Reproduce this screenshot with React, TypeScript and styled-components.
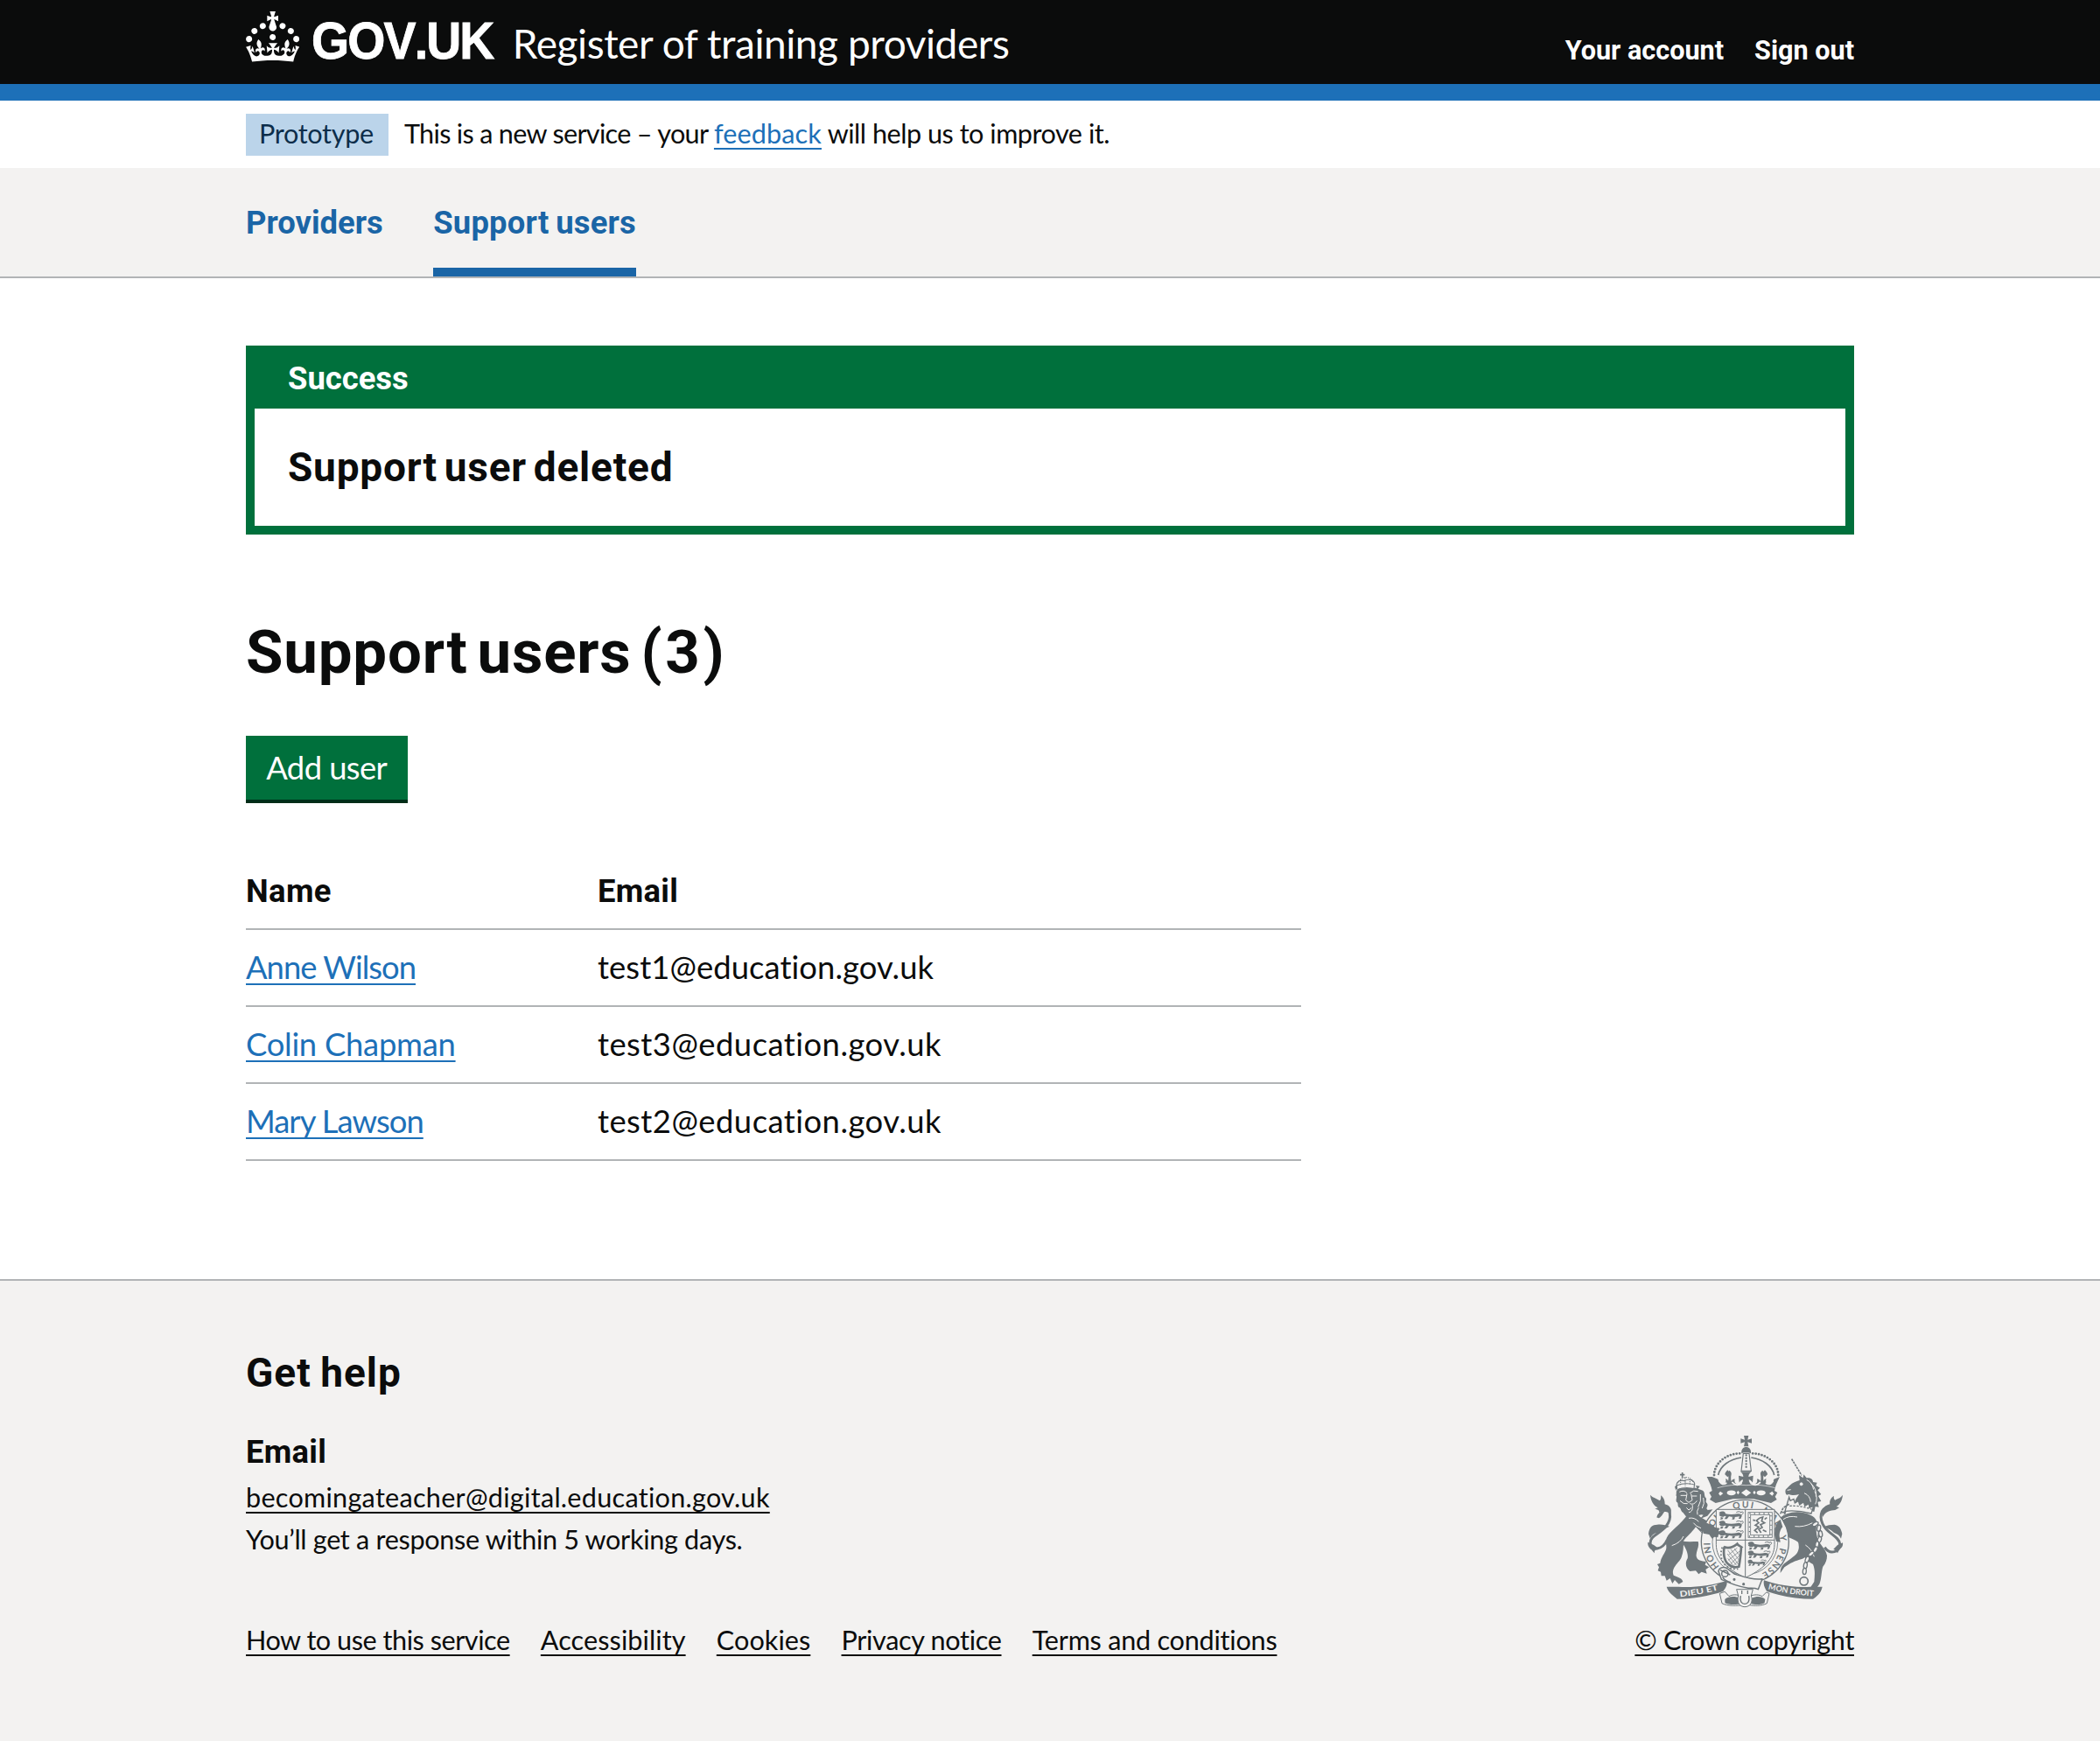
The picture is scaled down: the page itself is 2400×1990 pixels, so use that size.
import React from 'react';
import styled, { createGlobalStyle, css } from 'styled-components';

const ink = '#0b0c0c';
const link = '#1d70b8';
const navBlue = '#1a65a6';
const green = '#00703c';
const canvas = '#f3f2f1';
const rule = '#b1b4b6';
const crest = '#6f777b';

const regular = css`
  font-family: Lato, 'Noto Sans', sans-serif;
  font-weight: 400;
`;
const bold = css`
  font-family: Roboto, 'Liberation Sans', sans-serif;
  font-weight: 700;
`;

const GlobalStyle = createGlobalStyle`
  *, *::before, *::after { box-sizing: border-box; }
  body {
    margin: 0;
    background: #fff;
    color: ${ink};
    font-family: Lato, 'Noto Sans', sans-serif;
    -webkit-font-smoothing: antialiased;
  }
  h1, h2, h3, p, ul { margin: 0; padding: 0; }
  a { color: inherit; text-decoration: none; }
`;

const Page = styled.div`
  display: flex;
  flex-direction: column;
  min-height: 1990px;
`;

const Container = styled.div`
  width: 1838px;
  margin: 0 auto;
`;

const Track = styled.span<{ $ls: number; $ws?: number }>`
  letter-spacing: ${p => p.$ls}px;
  word-spacing: ${p => p.$ws ?? 0}px;
`;

/* Header */
const Header = styled.header`
  background: ${ink};
  border-bottom: 19px solid ${link};
`;
const HeaderRow = styled(Container)`
  display: flex;
  align-items: flex-start;
  height: 96px;
  color: #fff;
  white-space: nowrap;
`;
const Crown = styled.svg`
  flex: none;
  width: 61.3px;
  height: 57.5px;
  margin-top: 13px;
  fill: #fff;
`;
const Wordmark = styled.a`
  flex: none;
  width: 208px;
  margin: 17px 0 0 13.5px;
  font: 700 59px/60px 'Liberation Sans', Arial, sans-serif;
  font-kerning: none;
  letter-spacing: -2px;
  transform: scaleX(0.94);
  transform-origin: left;
  -webkit-text-stroke: 0.8px #fff;
`;
const ServiceName = styled.a`
  ${regular}
  margin: 20px 0 0 22px;
  font-size: 46px;
  line-height: 60px;
`;
const AccountNav = styled.nav`
  ${bold}
  display: flex;
  gap: 35px;
  margin: 38px 0 0 auto;
  font-size: 30.6px;
  line-height: 40px;
`;

/* Phase banner */
const Phase = styled(Container)`
  display: flex;
  align-items: center;
  gap: 18px;
  height: 77px;
  font-size: 30.6px;
  white-space: nowrap;
`;
const Tag = styled.strong`
  ${regular}
  width: 163px;
  height: 48px;
  padding: 0 0 3px 15px;
  background: #bbd4ea;
  color: #0c2d4a;
  line-height: 45px;
`;
const PhaseText = styled.span`
  height: 48px;
  line-height: 45px;
`;

const TextLink = styled.a<{ $ls?: number; $dark?: boolean }>`
  color: ${p => (p.$dark ? ink : link)};
  letter-spacing: ${p => p.$ls ?? 0}px;
  text-decoration: underline;
  text-decoration-thickness: 2px;
  text-decoration-skip-ink: none;
  text-underline-offset: 5px;
`;

/* Primary navigation */
const PrimaryNav = styled.nav`
  background: ${canvas};
  border-bottom: 2px solid ${rule};
`;
const NavList = styled(Container)`
  display: flex;
  gap: 57.5px;
`;
const NavItem = styled.a<{ $active?: boolean }>`
  ${bold}
  height: 124px;
  color: ${navBlue};
  font-size: 36.4px;
  line-height: 125px;
  box-shadow: ${p => (p.$active ? `inset 0 -10px 0 ${navBlue}` : 'none')};
`;

/* Main */
const Main = styled.main`
  width: 1838px;
  margin: 0 auto;
  padding: 77px 0 135px;
`;
const Notification = styled.section`
  height: 216px;
  background: ${green};
  padding: 10px;
`;
const NotificationTitle = styled.h2`
  ${bold}
  height: 62px;
  padding-left: 38px;
  color: #fff;
  font-size: 36.4px;
  line-height: 55px;
`;
const NotificationBody = styled.p`
  ${bold}
  height: 134px;
  padding-left: 38px;
  background: #fff;
  font-size: 46px;
  line-height: 134px;
`;
const PageTitle = styled.h1`
  ${bold}
  margin-top: 96px;
  font-size: 69px;
  line-height: 78px;
`;
const Button = styled.button`
  ${regular}
  display: block;
  width: 184.5px;
  height: 73px;
  margin-top: 56px;
  padding: 0;
  border: 0;
  background: ${green};
  box-shadow: 0 4px 0 #002d18;
  color: #fff;
  font-size: 36.4px;
  line-height: 73px;
  text-align: center;
`;
const Table = styled.div`
  width: 1206px;
  margin-top: 61px;
  font-size: 36.4px;
`;
const Row = styled.div<{ $head?: boolean }>`
  display: grid;
  grid-template-columns: 402px 1fr;
  height: 88px;
  border-bottom: 2px solid ${rule};
  line-height: 85px;
  ${p => p.$head && css`${bold} line-height: 87px;`}
`;

/* Footer */
const Footer = styled.footer`
  flex: 1;
  background: ${canvas};
  border-top: 2px solid ${rule};
`;
const FooterRow = styled(Container)`
  display: flex;
  justify-content: space-between;
  align-items: flex-end;
  padding-top: 75px;
  font-size: 30.6px;
  line-height: 48px;
  white-space: nowrap;
`;
const HelpTitle = styled.h2`
  ${bold}
  font-size: 46px;
  line-height: 60px;
`;
const HelpSubtitle = styled.h3`
  ${bold}
  margin: 37px 0 4px;
  font-size: 36.4px;
  line-height: 48px;
`;
const FooterLinks = styled.nav`
  display: flex;
  gap: 35.2px;
  margin-top: 67px;
`;
const Copyright = styled.div`
  display: flex;
  flex-direction: column;
  align-items: center;
  gap: 9px;
`;
const Crest = styled.svg`
  display: block;
  width: 232px;
  height: 206px;
`;

const CROWN =
  'M22.6 10.4c-1 .4-2-.1-2.4-1-.4-.9.1-2 1-2.4.9-.4 2 .1 2.4 1s-.1 2-1 2.4m-5.9 6.7c-.9.4-2-.1-2.4-1-.4-.9.1-2 1-2.4.9-.4 2 .1 2.4 1s-.1 2-1 2.4m10.8-3.7c-1 .4-2-.1-2.4-1-.4-.9.1-2 1-2.4.9-.4 2 .1 2.4 1s0 2-1 2.4m3.3 4.8c-1 .4-2-.1-2.4-1-.4-.9.1-2 1-2.4.9-.4 2 .1 2.4 1s-.1 2-1 2.4M17 4.7l2.3 1.2V2.5l-2.3.7-.2-.2.9-3h-3.4l.9 3-.2.2c-.1.1-2.3-.7-2.3-.7v3.4L15 4.7c.1.1.1.2.2.2l-1.3 4c-.1.2-.1.4-.1.6 0 1.1.8 2 1.9 2.2h.7c1-.2 1.9-1.1 1.9-2.1 0-.2 0-.4-.1-.6l-1.3-4c-.1-.2 0-.2.1-.3m-7.6 5.7c.9.4 2-.1 2.4-1 .4-.9-.1-2-1-2.4-.9-.4-2 .1-2.4 1s0 2 1 2.4m-5 3c.9.4 2-.1 2.4-1 .4-.9-.1-2-1-2.4-.9-.4-2 .1-2.4 1s.1 2 1 2.4m-3.2 4.8c.9.4 2-.1 2.4-1 .4-.9-.1-2-1-2.4-.9-.4-2 .1-2.4 1s0 2 1 2.4m14.8 11c4.4 0 8.6.3 12.3.8 1.1-4.5 2.4-7 3.7-8.8l-2.5-.9c.2 1.3.3 1.9 0 2.7-.4-.4-.8-1.1-1.1-2.3l-1.2 4c.7-.5 1.3-.8 2-.9-1.1 2.5-2.6 3.1-3.5 3-1.1-.2-1.7-1.2-1.5-2.1.3-1.2 1.5-1.5 2.1-.1 1.1-2.3-.8-3-2-2.3 1.9-1.9 2.1-3.5.6-5.6-2.1 1.6-2.1 3.2-1.2 5.5-1.2-1.4-3.2-.6-2.5 1.6.9-1.4 2.1-.5 1.9.8-.2 1.1-1.7 2.1-3.5 1.9-2.7-.2-2.9-2.1-2.9-3.6.7-.1 1.9.5 2.9 1.9l.4-4.3c-1.1 1.1-2.1 1.4-3.2 1.4.4-1.2 2.1-3 2.1-3h-5.4s1.7 1.9 2.1 3c-1.1 0-2.1-.2-3.2-1.4l.4 4.3c1-1.4 2.2-2 2.9-1.9-.1 1.5-.2 3.4-2.9 3.6-1.9.2-3.4-.8-3.5-1.9-.2-1.3 1-2.2 1.9-.8.7-2.3-1.2-3-2.5-1.6.9-2.2.9-3.9-1.2-5.5-1.5 2-1.3 3.7.6 5.6-1.2-.7-3.1 0-2 2.3.6-1.4 1.8-1.1 2.1.1.2.9-.3 1.9-1.5 2.1-.9.2-2.4-.5-3.5-3 .6 0 1.2.3 2 .9l-1.2-4c-.3 1.1-.7 1.9-1.1 2.3-.3-.8-.2-1.4 0-2.7l-2.9.9C1.3 23 2.6 25.5 3.7 30c3.7-.5 7.9-.8 12.3-.8';

/* One passant lion of the English quarters, drawn in a 92 x 30 cell. */
const Passant = ({ x, y, s = 1 }: { x: number; y: number; s?: number }) => (
  <g transform={`translate(${x} ${y}) scale(${s})`} fill={crest}>
    <path d="M4 4c7-5 16-4 20 1 3 6-1 12-6 14-7 1-14-2-15-8l5-1-5-2z" />
    <path d="M22 8c14 4 30 4 44 1 8-2 15 2 15 8l-4 9h-7l3-8c-12 3-26 3-36 0l-7 9h-9l6-9-9-3z" />
    <path d="M8 20l10 2-4 6H5l4-3zM48 20l10 1-3 7h-9l3-3z" />
    <path d="M76 14c8-2 12-8 8-12l-8 2M62 4c6-4 14-3 16 1" fill="none" stroke={crest} strokeWidth="3" />
  </g>
);

const Leaf = ({ x, y, r }: { x: number; y: number; r: number }) => (
  <path transform={`translate(${x} ${y}) rotate(${r})`} d="M0 6C8-8 22-10 36-4 26-2 22 8 6 11z" />
);

function RoyalArms() {
  return (
    <Crest viewBox="0 0 696 618" aria-hidden="true">
      <defs>
        <path id="garter" d="M349 502a120 120 0 1 1 .1 0" />
        <path id="mottoLeft" d="M126 568Q200 560 270 541" />
        <path id="mottoRight" d="M428 541Q500 560 592 566" />
      </defs>

      {/* crown */}
      <g fill={crest}>
        <path d="M347 15h14l-3 14 14-4v16l-14-4 3 15h-16l3-15-14 4V25l14 4-3-14z" />
        <path d="M337 76c-2-14 6-22 16-22s18 8 16 22l-7-3h-18z" />
        <path d="M343 76h20l7 60h-34z" fill="none" stroke={crest} strokeWidth="3.5" />
        <path d="M353 82v50" stroke={crest} strokeWidth="7" strokeDasharray="0 10" strokeLinecap="round" />
        <g fill="none" stroke={crest}>
          <path d="M243 150C244 108 286 76 332 76M463 150C462 108 420 76 374 76" strokeWidth="8.5" strokeDasharray="0 10.5" strokeLinecap="round" />
          <path d="M257 150C264 118 296 96 336 90M449 150C442 118 410 96 370 90" strokeWidth="5" />
        </g>
        <path d="M236 156l20 8c2 10 8 16 16 16 10 0 14-8 10-17 4 0 8 3 9 8 2-8 2-18-2-26 2-4 4-8 6-11 5 4 8 8 7 14-2 8-2 15 0 24 3-6 7-9 12-8-3 10 2 17 12 17 10 1 16-5 16-15-5 0-9 4-13 10l-2-24 16 4c0-8-5-13-10-17h38c-5 4-10 9-10 17l16-4-2 24c-4-6-8-10-13-10 0 10 6 16 16 15 10 0 15-7 12-17 5-1 9 2 12 8 2-9 2-16 0-24-1-6 2-10 7-14 2 3 4 7 6 11-4 8-4 18-2 26 1-5 5-8 9-8-4 9 0 17 10 17 8 0 14-6 16-16l20-8c-10 20-16 34-18 48l10 6-8 14 6 10-20 12-60-14h-70l-60 14-20-12 6-10-8-14 10-6c-2-14-8-28-18-48z" />
        <path d="M289 133c5 5 9 10 9 15l-9 9-9-9c0-5 4-10 9-15M417 133c5 5 9 10 9 15l-9 9-9-9c0-5 4-10 9-15" />
        <g fill={canvas}>
          <ellipse cx="302" cy="211" rx="15" ry="8.5" />
          <ellipse cx="404" cy="211" rx="15" ry="8.5" />
          <path d="M353 199l17 12-17 12-17-12zM264 206l10 7-10 8-6-7zM442 206l-10 7 10 8 6-7zM325 203l5 7-5 7-5-7zM381 203l5 7-5 7-5-7z" />
        </g>
        <path
          d="M262 172q8 14 22 6M306 176q14 14 30 2M444 172q-8 14-22 6M400 176q-14 14-30 2"
          fill="none" stroke={canvas} strokeWidth="6" strokeLinecap="round"
        />
        <path d="M254 194q50-14 99-9 49-5 99 9" fill="none" stroke={canvas} strokeWidth="2" />
      </g>

      {/* lion */}
      <g fill={crest}>
        <path d="M154 282C130 320 92 340 80 366c-6 14 2 26-2 40-6 16-18 28-20 46l-10 4 6 10-4 12 10 4 2 14 12 0 6 16 12-8 8 18 8-12 14 14 14-8c-2-12-16-16-32-22-8-18 6-34 20-50 14-18 14-44 14-68 10-14 30-30 42-48l34 34 14-2 8 14 10-6 12 4 10-10-4-10-12-8 2-12-16-2-8-16-34-20c-14-14-26-24-42-26z" />
        <path d="M130 376c20 4 40 2 58 2 6 16-8 34-6 50 2 14 18 18 34 18l-4 12 14 8-12 8 4 14-18-6-10 8-10-12-20 2c-14-10-18-28-8-44 4-20-10-40-22-60z" />
        <path d="M195 300l25-10 18-22-18 2z" />
        <path d="M118 200c-8 6-2 12-6 20 6 4-2 14 2 22 8 2 2 14 8 18 8 2 6 14 14 18l14 18c8 4 20 2 26-6l24-4 18 4c-6-8 2-12 2-22-8-4 6-12-2-22-8-4 4-14-6-20-4-12 0-20-12-24l-20-8-56 2z" />
        <path d="M112 204l-4-14 10-8M186 200l8-12-14-2" />
      </g>
      <g fill="none" stroke={canvas} strokeWidth="3">
        <path d="M124 208q16-8 26 4M160 212q12-12 28-6M128 220h20M166 222h18M150 214l-4 22 10 8 12-8-4-22M126 238q12 14 26 10M160 248q14 6 24-10M148 262l8 8 10-8M168 252c4 14-2 26-12 26M196 216q4 24-8 44M206 228q6 20-4 36M190 262q-8 12-4 24" />
        <path d="M98 392q30-10 40-32M172 314q8 12 26 18M156 298q20-4 34 12M200 344l30 8" />
      </g>
      <g fill="none" stroke={crest} strokeWidth="3.2">
        <path d="M116 200q30-12 60-2M114 186q32-12 64-2M116 198l-2-16c2-12 14-16 28-12 12-8 30-4 34 8l-2 18" />
        <path d="M118 178q10-18 26-20 22 0 28 18M144 158v30M128 166v18M160 164v20" strokeDasharray="4 3" />
        <path d="M134 141v18M126 149h16" strokeWidth="5" />
      </g>

      {/* lion's tail */}
      <path d="M82 372C66 408 26 412 24 384c-2-26 34-32 54-58 22-28 18-66-16-68" fill="none" stroke={crest} strokeWidth="9" />
      <g fill={crest}>
        <path d="M24 218c8 10 20 10 32 20 4-2 6-10 4-18 12 8 14 20 14 30 18 4 26 18 20 34-10-12-30-10-40-6 2-6-2-10-14-12l10-4c-16-8-24-24-26-44z" />
        <path d="M18 352c2-24 14-32 30-32 16-2 30 2 42 6-16 8-30 10-42 22-12 2-20 8-24 22z" />
        <path d="M16 380c-2 14 6 20 12 26l10 12c0-8 4-14 12-18l-14-10z" />
        <Leaf x={44} y={290} r={-22} />
      </g>

      {/* unicorn */}
      <path d="M509 95l34 56" stroke={crest} strokeWidth="5" strokeDasharray="8 2.5" fill="none" />
      <g fill={crest}>
        <path d="M488 200l14-14c10-10 22-14 34-18l-2-18 14 10 2-12 10 12c16-2 22 6 22 14l14 2-4 10 14 8-8 8 12 14-10 6 10 18-12 2 4 18-12-2-4 18-12-4c-20-2-40-10-54-24-2-12 8-22 14-32-12 4-26 4-34 0l-8 2c-4-4-6-10-4-18z" />
        <path d="M466 300c22-24 72-32 108-12 18 8 24 20 20 38-2 16 0 30 4 42 8 22 28 34 32 58 0 14-4 26-14 38-6 18-4 40-12 60l-10 14-20-4 12-18c2-22 4-40-4-60-18-10-34-22-34-44 2-16-8-28-26-38-18-8-36-18-48-16-6 10-6 22-2 32l-4 10-14-6c-12-30-8-70 12-94z" />
        <path d="M530 376l42 6c2 24-6 48-28 56-24 6-40 14-60 28l-14 20c0-18 6-28 18-36 18-14 32-22 40-34 8-14 6-26 2-40z" />
        <path d="M600 330l14 14-10 4 8 16-14-2z" />
      </g>
      <g fill="none" stroke={canvas} strokeWidth="3">
        <circle cx="542" cy="181" r="4.5" fill={canvas} />
        <path d="M494 202l12-2M560 166q20 10 24 34M574 178q22 20 18 46M552 212q20 8 22 30M588 206q12 22 2 44M480 302q18-14 48-8M520 326q30 4 60-12M556 390q22 14 30 40" />
      </g>
      <g fill={canvas} stroke={crest} strokeWidth="4">
        <path d="M500 226l4 12 12-6 4 14 12-8 4 14 14-10 4 14 14-8 2 14 14-6-8 26c-30-8-56-12-90-8z" />
      </g>
      <path d="M502 256q40-2 76 12" fill="none" stroke={crest} strokeWidth="4" strokeDasharray="7 5" />
      <path d="M500 250l-20 12-8 18 16-4-6 14" fill="none" stroke={crest} strokeWidth="5" strokeDasharray="9 3" />

      {/* unicorn's tail */}
      <path d="M622 398C640 426 676 414 674 386c-2-24-38-34-54-60-18-28-14-62 18-68" fill="none" stroke={crest} strokeWidth="9" />
      <g fill={crest}>
        <path d="M684 218c-8 12-18 12-26 18-4-2-6-8-4-14-12 6-16 18-14 28-20 4-30 20-24 44 8-20 26-22 42-24l14-8-10-4c14-8 20-22 22-40z" />
        <path d="M682 352c-4-20-10-28-26-32-14 0-26 2-38 8 16 6 26 10 36 20 12 4 20 10 24 20z" />
        <path d="M684 382c2 14-6 20-12 24l-6 12c-4-8-8-12-14-14l14-14z" />
      </g>

      {/* chain */}
      <g fill={canvas} stroke={crest} strokeWidth="4">
        {[
          [590, 318, 60], [602, 332, 10], [608, 352, -10], [604, 372, 20], [596, 388, 10], [590, 406, 30],
          [576, 420, 50], [562, 440, 20], [556, 460, 10], [553, 480, 5],
        ].map(([x, y, r]) => (
          <ellipse key={y} cx={x} cy={y} rx="6" ry="11" transform={`rotate(${r} ${x} ${y})`} />
        ))}
        <circle cx="551" cy="514" r="14" strokeWidth="5" />
      </g>

      {/* garter */}
      <g>
        <ellipse cx="349" cy="378" rx="150" ry="143" fill={canvas} stroke={crest} strokeWidth="4" />
        <circle cx="349" cy="380" r="112" fill="none" stroke={crest} strokeWidth="2.5" />
        <g fill={crest} fontFamily="Lato, sans-serif" fontWeight="700" fontSize="31">
          <text><textPath href="#garter" startOffset="98" letterSpacing="3">HONI</textPath></text>
          <text><textPath href="#garter" startOffset="222" letterSpacing="3">SOIT</textPath></text>
          <text><textPath href="#garter" startOffset="336" letterSpacing="5">QUI</textPath></text>
          <text><textPath href="#garter" startOffset="436" letterSpacing="3">MAL</textPath></text>
          <text><textPath href="#garter" startOffset="540">Y</textPath></text>
          <text><textPath href="#garter" startOffset="582" letterSpacing="4">PENSE</textPath></text>
        </g>
      </g>

      {/* shield */}
      <path d="M250 268h200v120c0 52-44 88-100 114-56-26-100-62-100-114z" fill={canvas} stroke={crest} strokeWidth="3" />
      <path d="M350 268v232M250 373h200" stroke={crest} strokeWidth="3" fill="none" />
      <Passant x={257} y={274} />
      <Passant x={257} y={306} />
      <Passant x={257} y={339} />
      <Passant x={356} y={378} s={0.98} />
      <Passant x={356} y={409} s={0.92} />
      <Passant x={356} y={440} s={0.76} />
      <g fill="none" stroke={crest}>
        <rect x="360" y="278" width="82" height="86" strokeWidth="2.5" />
        <rect x="368" y="286" width="66" height="70" strokeWidth="2.5" />
        <rect x="364" y="282" width="74" height="78" strokeWidth="4" strokeDasharray="4 12" />
        <path d="M398 298l12-4-4 14 10 6-14 6 6 10-12 6 8 12M398 298l-10 8 8 8-12 8 12 6-14 12 10 8M410 338l12 6M384 306l-8-2M416 302l8-6" strokeWidth="5" />
        <path d="M276 396c18 8 34 0 46-10 4 8 14 8 18 14M278 396c-4 20-2 48 14 60 8 8 22 12 36 8 4-20 6-42 8-66" strokeWidth="8" />
        <path d="M271 398c-8 20-6 48 14 64 12 9 26 12 40 10" strokeWidth="5" strokeDasharray="5 7" />
        <path d="M290 408l36 48M300 404l30 40M312 402l20 26M288 420l32 40M290 436l18 24M322 400l-30 24M332 410l-40 32M332 424l-32 30M330 440l-18 18" strokeWidth="2" />
      </g>

      {/* forepaws resting on the garter */}
      <g fill={crest}>
        <path d="M196 304l30 14 14 4 6 8 16 2-4 10 12 6-12 6-2 10-12-2-8 6-10-14-20-4z" />
        <path d="M470 302c-16 14-20 34-20 54l6 22 14 2-2-14c-4-14 2-30 10-38z" />
      </g>

      {/* buckle and strap */}
      <g fill={canvas} stroke={crest} strokeWidth="4.5" strokeLinejoin="round">
        <path d="M258 480c2-14 20-18 32-8l24 18c34 10 64 20 94 16l-14 36c-12-6-24-4-34-4-34-6-66-18-92-30z" />
        <circle cx="280" cy="488" r="11" />
        <path d="M264 476l34 16M272 500q8 14 28 18" fill="none" />
        <circle cx="312" cy="508" r="2.5" fill={crest} />
        <circle cx="344" cy="524" r="2.5" fill={crest} />
      </g>

      {/* motto ribbons */}
      <g fill={crest}>
        <path d="M80 533l40 0c50 4 112-4 166-20 4 16-6 26-12 36-50 16-100 26-158 26-10-10-30-20-36-42z" />
        <path d="M614 533l-40 0c-52 4-108-4-160-22-4 16 4 28 10 38 54 18 104 26 158 26 12-8 28-20 32-42z" />
        <path d="M262 556l8 34c20 10 54 8 70 6l8-8-10-22c-18-8-34-6-44 0l-14-16zM432 556l-8 34c-20 10-44 8-60 6l-8-8 8-22c18-8 34-6 44 0l14-14z" fill={canvas} stroke={crest} strokeWidth="3" />
        <path d="M280 576c14-12 36-10 52-4l6 18c-18 6-44 6-58-2zM418 576c-14-12-30-10-46-4l-6 18c18 6 38 6 50-2z" />
        <path d="M320 542h56l-6 22c8 22-4 38-22 38s-28-16-22-38z" fill={canvas} stroke={crest} strokeWidth="3" />
        <path d="M334 564c-4 20 4 28 14 28s18-8 14-28M338 546v12M358 546v12" fill="none" stroke={crest} strokeWidth="4" />
      </g>
      <g fill={canvas} fontFamily="Lato, sans-serif" fontWeight="700" fontSize="27">
        <text><textPath href="#mottoLeft" textLength="134" lengthAdjust="spacingAndGlyphs">DIEU ET</textPath></text>
        <text><textPath href="#mottoRight" textLength="158" lengthAdjust="spacingAndGlyphs">MON DROIT</textPath></text>
      </g>
    </Crest>
  );
}

const users = [
  { name: 'Anne Wilson', email: 'test1@education.gov.uk', nameLs: -0.98, emailLs: 0.07 },
  { name: 'Colin Chapman', email: 'test3@education.gov.uk', nameLs: -0.26, emailLs: 0.47 },
  { name: 'Mary Lawson', email: 'test2@education.gov.uk', nameLs: -0.98, emailLs: 0.47 },
];

const footerLinks = [
  { label: 'How to use this service', ls: -0.46 },
  { label: 'Accessibility', ls: 0.08 },
  { label: 'Cookies', ls: 0.06 },
  { label: 'Privacy notice', ls: -0.33 },
  { label: 'Terms and conditions', ls: -0.23 },
];

export default function App() {
  return (
    <Page>
      <GlobalStyle />
      <Header>
        <HeaderRow>
          <Crown viewBox="0 0 32 30" aria-hidden="true">
            <path d={CROWN} />
          </Crown>
          <Wordmark href="#">GOV.UK</Wordmark>
          <ServiceName href="#">
            <Track $ls={-0.43}>Register of training providers</Track>
          </ServiceName>
          <AccountNav>
            <a href="#"><Track $ls={0}>Your account</Track></a>
            <a href="#"><Track $ls={0}>Sign out</Track></a>
          </AccountNav>
        </HeaderRow>
      </Header>

      <Phase>
        <Tag><Track $ls={-0.3}>Prototype</Track></Tag>
        <PhaseText>
          <Track $ls={-0.69}>This is a new service – your </Track>
          <TextLink href="#" $ls={0.11}>feedback</TextLink>
          <Track $ls={-0.48}> will help us to improve it.</Track>
        </PhaseText>
      </Phase>

      <PrimaryNav>
        <NavList>
          <NavItem href="#"><Track $ls={0}>Providers</Track></NavItem>
          <NavItem href="#" $active><Track $ls={0.2} $ws={-1.5}>Support users</Track></NavItem>
        </NavList>
      </PrimaryNav>

      <Main>
        <Notification>
          <NotificationTitle><Track $ls={0}>Success</Track></NotificationTitle>
          <NotificationBody><Track $ls={0.8} $ws={-4.5}>Support user deleted</Track></NotificationBody>
        </Notification>
        <PageTitle>
          <Track $ls={0.8} $ws={-7}>Support users </Track>
          <Track $ls={3.6}>(3)</Track>
        </PageTitle>
        <Button type="button"><Track $ls={-0.6}>Add user</Track></Button>
        <Table>
          <Row $head>
            <span><Track $ls={0.4}>Name</Track></span>
            <span><Track $ls={0.3}>Email</Track></span>
          </Row>
          {users.map(u => (
            <Row key={u.name}>
              <span><TextLink href="#" $ls={u.nameLs}>{u.name}</TextLink></span>
              <Track $ls={u.emailLs}>{u.email}</Track>
            </Row>
          ))}
        </Table>
      </Main>

      <Footer>
        <FooterRow>
          <div>
            <HelpTitle><Track $ls={1} $ws={-2}>Get help</Track></HelpTitle>
            <HelpSubtitle><Track $ls={0.3}>Email</Track></HelpSubtitle>
            <p><TextLink href="#" $dark $ls={0.27}>becomingateacher@digital.education.gov.uk</TextLink></p>
            <p><Track $ls={-0.31}>You’ll get a response within 5 working days.</Track></p>
            <FooterLinks>
              {footerLinks.map(l => (
                <TextLink key={l.label} href="#" $dark $ls={l.ls}>{l.label}</TextLink>
              ))}
            </FooterLinks>
          </div>
          <Copyright>
            <RoyalArms />
            <TextLink href="#" $dark $ls={-0.35}>© Crown copyright</TextLink>
          </Copyright>
        </FooterRow>
      </Footer>
    </Page>
  );
}
